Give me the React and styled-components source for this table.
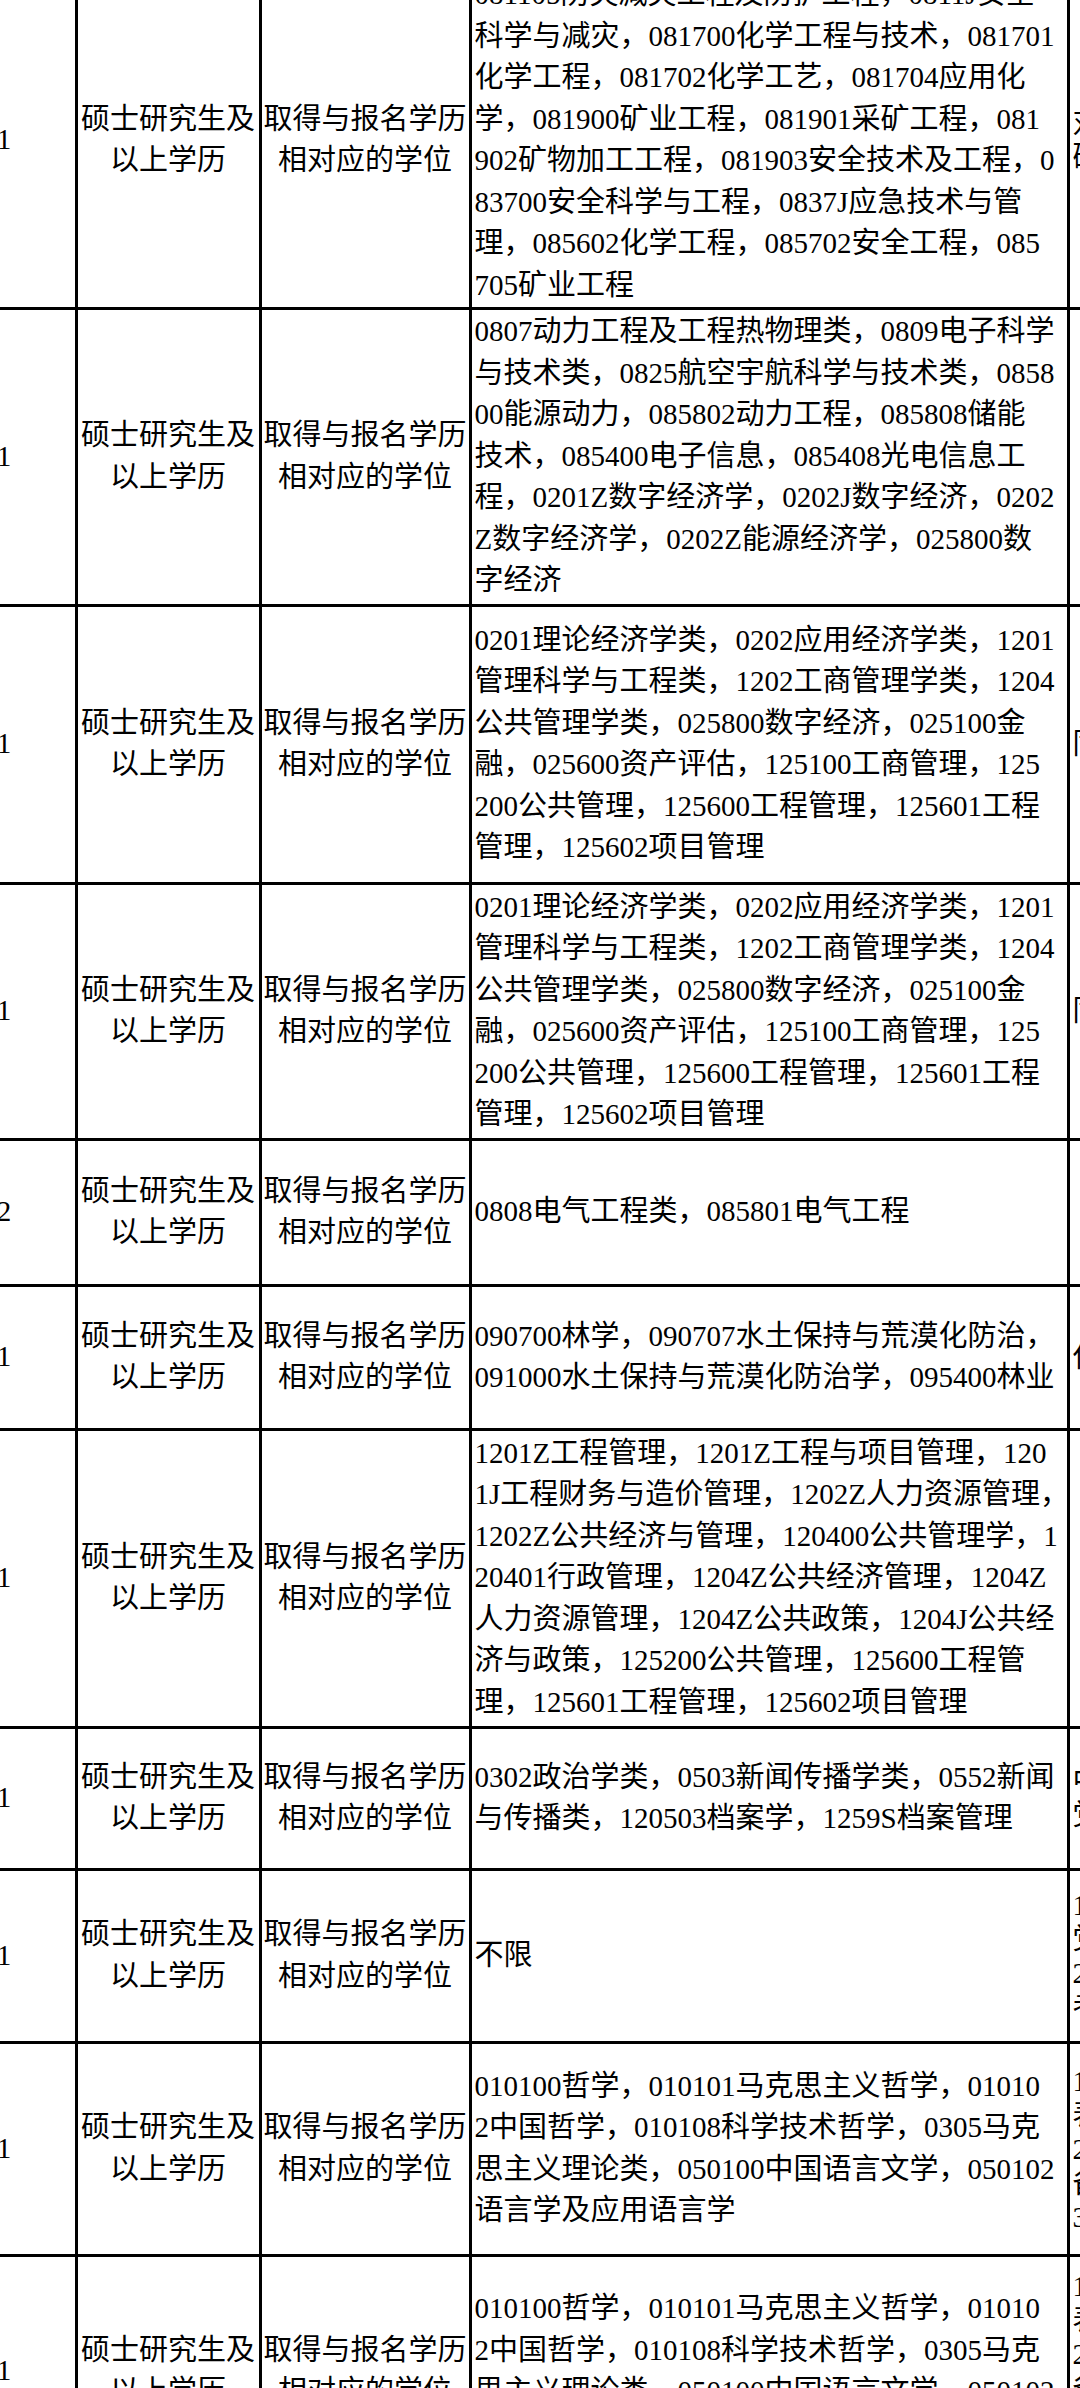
import React from "react";
import styled, { createGlobalStyle } from "styled-components";

const GlobalStyle = createGlobalStyle`
  html, body {
    margin: 0;
    padding: 0;
    background: #ffffff;
    overflow: hidden;
  }
  body {
    font-family: "Liberation Serif", "Noto Sans CJK SC", serif;
    color: #000000;
  }
`;

const Viewport = styled.div`
  width: 1080px;
  height: 2388px;
  overflow: hidden;
  background: #ffffff;
`;

const Table = styled.div`
  display: flex;
  flex-direction: column;
  width: max-content;
  margin: -26.5px 0 0 -66.5px;
  font-family: "Liberation Serif", "Noto Sans CJK SC", serif;
  font-size: 29px;
  color: #000;
`;

const Row = styled.div`
  display: grid;
  grid-template-columns: 144px 184px 210px 598px 232px;
  height: ${(p) => p.$h}px;
`;

const Cell = styled.div`
  box-sizing: border-box;
  border-right: 3px solid #000;
  border-bottom: 3px solid #000;
  display: flex;
  flex-direction: column;
  justify-content: center;
  min-width: 0;
  line-height: 41.5px;
`;

const NumCell = styled(Cell)`
  align-items: center;
  overflow: hidden;
`;

const CenterCell = styled(Cell)`
  align-items: center;
  text-align: center;
  overflow: hidden;
`;

const MajorCell = styled(Cell)`
  align-items: flex-start;
  padding-left: 3px;
  overflow: visible;
`;

const NoteCell = styled(Cell)`
  align-items: flex-start;
  padding-left: 3px;
  line-height: 34px;
  border-right: none;
  overflow: hidden;
`;

const Line = styled.div`
  white-space: nowrap;
`;

const EDU = ["硕士研究生及", "以上学历"];
const DEGREE = ["取得与报名学历", "相对应的学位"];

const PHIL = [
  "010100哲学，010101马克思主义哲学，01010",
  "2中国哲学，010108科学技术哲学，0305马克",
  "思主义理论类，050100中国语言文学，050102",
  "语言学及应用语言学",
];

const ECON = [
  "0201理论经济学类，0202应用经济学类，1201",
  "管理科学与工程类，1202工商管理学类，1204",
  "公共管理学类，025800数字经济，025100金",
  "融，025600资产评估，125100工商管理，125",
  "200公共管理，125600工程管理，125601工程",
  "管理，125602项目管理",
];

const rows = [
  {
    h: 336,
    n: "1",
    major: [
      "081105防灾减灾工程及防护工程，0811J安全",
      "科学与减灾，081700化学工程与技术，081701",
      "化学工程，081702化学工艺，081704应用化",
      "学，081900矿业工程，081901采矿工程，081",
      "902矿物加工工程，081903安全技术及工程，0",
      "83700安全科学与工程，0837J应急技术与管",
      "理，085602化学工程，085702安全工程，085",
      "705矿业工程",
    ],
    note: ["对口专业研究方向", "研究生阶段所学"],
  },
  {
    h: 297,
    n: "1",
    major: [
      "0807动力工程及工程热物理类，0809电子科学",
      "与技术类，0825航空宇航科学与技术类，0858",
      "00能源动力，085802动力工程，085808储能",
      "技术，085400电子信息，085408光电信息工",
      "程，0201Z数字经济学，0202J数字经济，0202",
      "Z数字经济学，0202Z能源经济学，025800数",
      "字经济",
    ],
    note: [],
  },
  { h: 278, n: "1", major: ECON, note: ["同等条件下优先"] },
  { h: 256, n: "1", major: ECON, note: ["同等条件下优先"] },
  { h: 146, n: "2", major: ["0808电气工程类，085801电气工程"], note: [] },
  {
    h: 144,
    n: "1",
    major: [
      "090700林学，090707水土保持与荒漠化防治，",
      "091000水土保持与荒漠化防治学，095400林业",
    ],
    note: ["仅限应届毕业生"],
  },
  {
    h: 298,
    n: "1",
    major: [
      "1201Z工程管理，1201Z工程与项目管理，120",
      "1J工程财务与造价管理，1202Z人力资源管理，",
      "1202Z公共经济与管理，120400公共管理学，1",
      "20401行政管理，1204Z公共经济管理，1204Z",
      "人力资源管理，1204Z公共政策，1204J公共经",
      "济与政策，125200公共管理，125600工程管",
      "理，125601工程管理，125602项目管理",
    ],
    note: [],
  },
  {
    h: 142,
    n: "1",
    major: [
      "0302政治学类，0503新闻传播学类，0552新闻",
      "与传播类，120503档案学，1259S档案管理",
    ],
    note: ["中共党员（含预备", "党员）"],
  },
  {
    h: 173,
    n: "1",
    major: ["不限"],
    note: ["1.中共党员（含预备", "党员）；", "2.具有较强的文字", "考核合格"],
  },
  {
    h: 213,
    n: "1",
    major: PHIL,
    note: ["1.具有较强的文字", "表达能力；", "2.中共党员（含预", "备党员）；", "3.全日制"],
  },
  {
    h: 232,
    n: "1",
    major: PHIL,
    note: ["1.具有较强的文字", "表达能力；", "2.中共党员（含预", "备党员）；", "3.全日制", "（须提供）"],
  },
];

const Lines = ({ items }) => items.map((t, i) => <Line key={i}>{t}</Line>);

export default function App() {
  return (
    <>
      <GlobalStyle />
      <Viewport>
        <Table>
          {rows.map((r, i) => (
            <Row key={i} $h={r.h}>
              <NumCell>{r.n}</NumCell>
              <CenterCell>
                <Lines items={EDU} />
              </CenterCell>
              <CenterCell>
                <Lines items={DEGREE} />
              </CenterCell>
              <MajorCell>
                <Lines items={r.major} />
              </MajorCell>
              <NoteCell>
                <Lines items={r.note} />
              </NoteCell>
            </Row>
          ))}
        </Table>
      </Viewport>
    </>
  );
}
